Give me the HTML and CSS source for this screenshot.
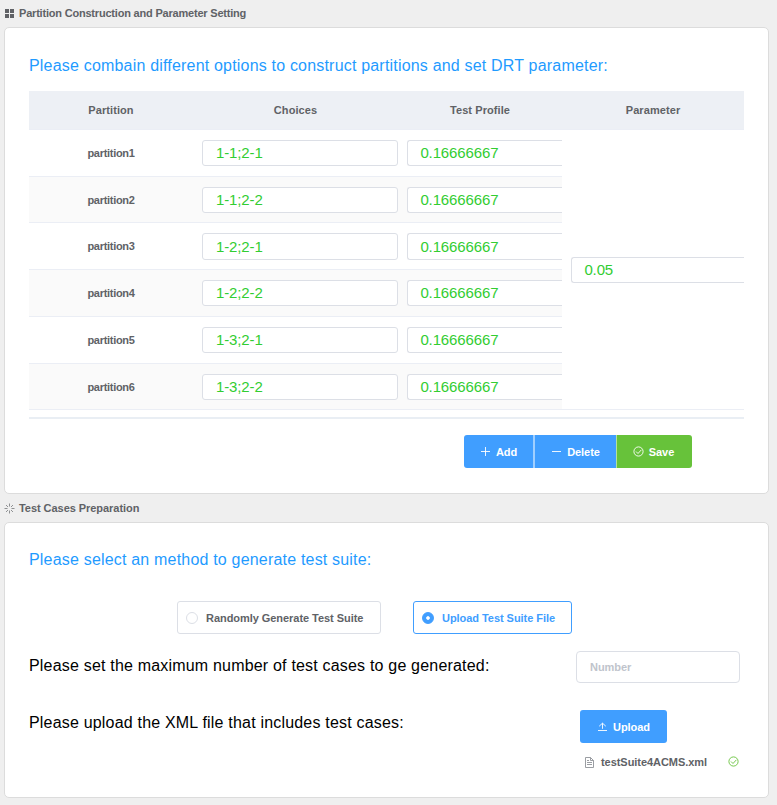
FILE: index.html
```html
<!DOCTYPE html>
<html lang="en">
<head>
<meta charset="utf-8">
<title>Partition Setting</title>
<link rel="stylesheet" href="styles.css">
</head>
<body>
<div class="section-title first">
  <svg class="icon" viewBox="0 0 11 11"><path fill="currentColor" d="M0 1h4v4H0zM5 1h4v4H5zM0 6h4v4H0zM5 6h4v4H5z"/></svg>
  <span>Partition Construction and Parameter Setting</span>
</div>
<section class="card card-partition">
  <h2 class="lead">Please combain different options to construct partitions and set DRT parameter:</h2>
  <div class="table">
    <div class="head">Partition</div><div class="head">Choices</div><div class="head">Test Profile</div><div class="head">Parameter</div>
    <div class="cell">partition1</div><div class="cell field"><div class="input">1-1;2-1</div></div><div class="cell field"><div class="input cut">0.16666667</div></div>
    <div class="cell param field"><div class="input cut">0.05</div></div>
    <div class="cell alt">partition2</div><div class="cell field alt"><div class="input">1-1;2-2</div></div><div class="cell field alt"><div class="input cut">0.16666667</div></div>
    <div class="cell">partition3</div><div class="cell field"><div class="input tall">1-2;2-1</div></div><div class="cell field"><div class="input cut tall">0.16666667</div></div>
    <div class="cell alt">partition4</div><div class="cell field alt"><div class="input">1-2;2-2</div></div><div class="cell field alt"><div class="input cut">0.16666667</div></div>
    <div class="cell">partition5</div><div class="cell field"><div class="input">1-3;2-1</div></div><div class="cell field"><div class="input cut">0.16666667</div></div>
    <div class="cell alt">partition6</div><div class="cell field alt"><div class="input">1-3;2-2</div></div><div class="cell field alt"><div class="input cut">0.16666667</div></div>
  </div>
  <div class="buttons">
    <button class="btn add"><svg class="icon" viewBox="0 0 11 11"><path class="line" d="M1 5.5h9M5.5 1v9"/></svg><span>Add</span></button>
    <button class="btn delete"><svg class="icon" viewBox="0 0 11 11"><path class="line" d="M1 5.5h9"/></svg><span>Delete</span></button>
    <button class="btn save"><svg class="icon" viewBox="0 0 11 11"><path class="line" d="M3 5.5l2 2 3.4-3.7"/><circle class="line" cx="5.5" cy="5.5" r="4.6"/></svg><span>Save</span></button>
  </div>
</section>
<div class="section-title second">
  <svg class="icon" viewBox="0 0 11 11"><path class="line soft" d="M5.5.5v3M5.5 7.5v3M.5 5.5h3M7.5 5.5h3M2 2l2 2M7 7l2 2M9 2L7 4M4 7L2 9"/></svg>
  <span>Test Cases Preparation</span>
</div>
<section class="card card-cases">
  <h2 class="lead">Please select an method to generate test suite:</h2>
  <div class="radios">
    <label class="radio random"><i class="dot"></i><span>Randomly Generate Test Suite</span></label>
    <label class="radio checked"><i class="dot"></i><span>Upload Test Suite File</span></label>
  </div>
  <div class="row number-row">
    <p>Please set the maximum number of test cases to ge generated:</p>
    <div class="number">Number</div>
  </div>
  <div class="row upload-row">
    <p>Please upload the XML file that includes test cases:</p>
    <div class="upload">
      <button class="btn up"><svg class="icon" viewBox="0 0 11 11"><path class="line" d="M1 9.5h9M5.5 7.8V2.2M2.2 5.2l3.3-3 3.3 3"/></svg><span>Upload</span></button>
      <div class="file">
        <svg class="icon doc" viewBox="0 0 11 11"><path class="line" d="M1.5.5h5l3 3v7h-8zM6.5.5v3h3M3 3.5h2M3 5.5h5M3 7.5h5"/></svg>
        <span>testSuite4ACMS.xml</span>
        <svg class="icon ok" viewBox="0 0 11 11"><path class="line" d="M3 5.5l2 2 3.4-3.7"/><circle class="line" cx="5.5" cy="5.5" r="4.6"/></svg>
      </div>
    </div>
  </div>
</section>
</body>
</html>
```
FILE: styles.css
```css
* { box-sizing: border-box; }
body {
  margin: 0;
  padding: 0 8px 0 4px;
  height: 805px;
  overflow: hidden;
  background: #efefef;
  font: bold 11px/15px "Liberation Sans", Arial, sans-serif;
  letter-spacing: -0.05px;
  color: #606266;
}
.icon { width: 11px; height: 11px; flex: none; }
.line { fill: none; stroke: currentColor; stroke-width: 0.9; }
.soft { opacity: 0.75; }
.section-title { display: flex; align-items: center; height: 27px; gap: 4px; }
.section-title.first { padding-left: 1px; gap: 3px; letter-spacing: -0.2px; }
.section-title.second { height: 28px; }
.card {
  width: 765px;
  padding: 0 24px;
  background: #fff;
  border: 1px solid #dcdcdc;
  border-radius: 5px;
}
.card-partition { height: 467px; }
.card-cases { height: 276px; }
.lead { margin: 0; font-size: 16px; line-height: 20px; font-weight: normal; letter-spacing: 0.19px; color: #1f9bff; }
.card-partition .lead { padding-top: 28px; height: 63px; }
.card-cases .lead { padding-top: 27px; height: 78px; }
.table {
  display: grid;
  grid-template-columns: 164px 205px 164px 182px;
  grid-template-rows: 39px 47px 46px 47px 47px 47px 46px;
  height: 328px;
  border-bottom: 2px solid #e9eef4;
}
.head, .cell { display: flex; align-items: center; justify-content: center; border-bottom: 1px solid #ebeef5; }
.head { background: #edf0f5; letter-spacing: 0.08px; }
.cell { background: #fff; letter-spacing: -0.3px; }
.alt { background: #fafafa; }
.alt:not(.field) { padding-top: 1px; }
.field { padding-left: 9px; }
.param { grid-column: 4; grid-row: 2 / 8; }
.input {
  width: 100%;
  height: 26px;
  padding-left: 13px;
  border: 1px solid #dcdfe6;
  border-radius: 3px;
  background: #fff;
  font: 15px/24px "Liberation Sans", Arial, sans-serif;
  letter-spacing: -0.13px;
  color: #32cd32;
}
.cut { border-right: 0; border-radius: 3px 0 0 3px; padding-left: 12.4px; }
.tall { height: 27px; margin-top: 1px; line-height: 25px; }
.buttons { display: flex; margin: 16px 0 0 435px; }
.btn {
  display: flex;
  align-items: center;
  justify-content: center;
  gap: 5px;
  height: 33px;
  padding: 0;
  border: 0;
  border-radius: 3px;
  background: #409eff;
  color: #fff;
  font: inherit;
  letter-spacing: -0.05px;
}
.btn span, .radio span { padding-top: 2px; }
.add { width: 70px; border-right: 1px solid #a0cfff; border-radius: 3px 0 0 3px; }
.delete { width: 82px; border-left: 1px solid #a0cfff; border-radius: 0; }
.save { width: 76px; padding-right: 2px; background: #67c23a; border-left: 1px solid #b3e19d; border-radius: 0 3px 3px 0; }
.radios { display: flex; gap: 32px; padding-left: 148px; }
.radio { display: flex; align-items: center; gap: 8px; width: 159px; height: 33px; padding-left: 8px; border: 1px solid #dcdfe6; border-radius: 3px; }
.random { width: 204px; }
.dot { width: 12px; height: 12px; border: 1px solid #dcdfe6; border-radius: 50%; background: #fff; }
.checked { border-color: #409eff; color: #409eff; }
.checked .dot { border-color: #409eff; background: radial-gradient(circle, #fff 1.4px, #409eff 2.2px); }
.row { display: flex; justify-content: space-between; padding-right: 4px; }
.row p { margin: 0; font-size: 16px; line-height: 20px; font-weight: normal; letter-spacing: 0.19px; color: #000; }
.number-row { margin-top: 17px; height: 59px; }
.number-row p { padding-top: 5px; }
.upload-row p { padding-top: 3px; }
.number { width: 164px; height: 32px; padding: 8px 13px; border: 1px solid #dcdfe6; border-radius: 4px; color: #c0c4cc; }
.upload { width: 160px; }
.up { width: 87px; }
.file { display: flex; align-items: center; height: 18px; margin-top: 10px; padding-left: 4px; }
.file span { margin-left: 6px; flex: none; }
.doc { color: #909399; }
.ok { margin: -2px 0 0 21px; color: #67c23a; }
```
